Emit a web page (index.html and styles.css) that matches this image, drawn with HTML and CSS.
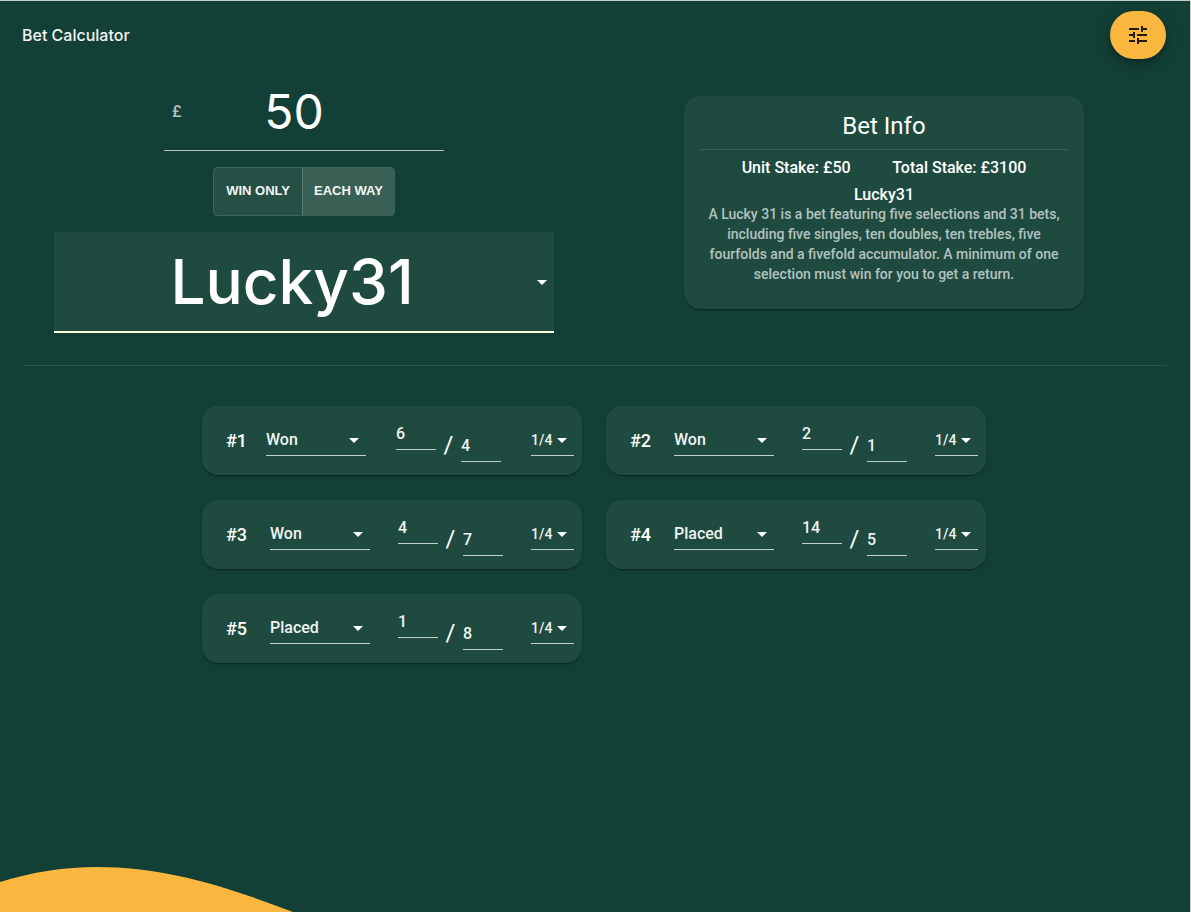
FILE: index.html
```html
<!DOCTYPE html>
<html lang="en">
<head>
<meta charset="utf-8">
<meta name="viewport" content="width=device-width, initial-scale=1">
<title>Bet Calculator</title>
<link rel="stylesheet" href="styles.css">
</head>
<body>
<svg class="wave" viewBox="0 0 300 45" aria-hidden="true"><path d="M0 15C32 5 65 0 97 0C165 0 225 19 293 45H0Z"/></svg>
<div class="page">
  <header class="header">
    <h1 class="brand">Bet Calculator</h1>
    <button class="fab" type="button" aria-label="Settings">
      <svg class="fab-icon" viewBox="0 0 24 24" aria-hidden="true"><path d="M3 17v2h6v-2H3zM3 5v2h10V5H3zm10 16v-2h8v-2h-8v-2h-2v6h2zM7 9v2H3v2h4v2h2V9H7zm14 4v-2H11v2h10zm-6-4h2V7h4V5h-4V3h-2v6z"/></svg>
    </button>
  </header>
  <main>
    <section class="setup">
      <div class="controls">
        <label class="stake"><span class="currency">£</span><input class="stake-input" type="text" inputmode="decimal" value="50" aria-label="Stake"></label>
        <div class="toggle" role="group" aria-label="Bet mode">
          <button class="toggle-button" type="button" aria-pressed="false">WIN ONLY</button>
          <button class="toggle-button toggle-button-active" type="button" aria-pressed="true">EACH WAY</button>
        </div>
        <div class="picker picker-type">
          <select class="select" aria-label="Bet type"><option>Lucky31</option></select>
          <svg class="arrow" viewBox="0 0 24 24" aria-hidden="true"><path d="M7 10l5 5 5-5z"/></svg>
        </div>
      </div>
      <article class="info">
        <h2 class="info-title">Bet Info</h2>
        <div class="stats"><span>Unit Stake: £50</span><span>Total Stake: £3100</span></div>
        <h3 class="info-name">Lucky31</h3>
        <p class="info-text">A Lucky 31 is a bet featuring five selections and 31 bets, including five singles, ten doubles, ten trebles, five fourfolds and a fivefold accumulator. A minimum of one selection must win for you to get a return.</p>
      </article>
    </section>
    <section class="legs" aria-label="Selections">
      <div class="leg">
        <span class="leg-name leg-name-narrow">#1</span>
        <div class="picker picker-result"><select class="select" aria-label="Result 1"><option>Won</option><option>Placed</option></select><svg class="arrow" viewBox="0 0 24 24" aria-hidden="true"><path d="M7 10l5 5 5-5z"/></svg></div>
        <div class="odds"><input class="odd" type="text" value="6" aria-label="Numerator 1"><span class="slash">/</span><input class="odd odd-low" type="text" value="4" aria-label="Denominator 1"></div>
        <div class="picker picker-place"><select class="select" aria-label="Place terms 1"><option>1/4</option></select><svg class="arrow" viewBox="0 0 24 24" aria-hidden="true"><path d="M7 10l5 5 5-5z"/></svg></div>
      </div>
      <div class="leg">
        <span class="leg-name">#2</span>
        <div class="picker picker-result"><select class="select" aria-label="Result 2"><option>Won</option><option>Placed</option></select><svg class="arrow" viewBox="0 0 24 24" aria-hidden="true"><path d="M7 10l5 5 5-5z"/></svg></div>
        <div class="odds"><input class="odd" type="text" value="2" aria-label="Numerator 2"><span class="slash">/</span><input class="odd odd-low" type="text" value="1" aria-label="Denominator 2"></div>
        <div class="picker picker-place"><select class="select" aria-label="Place terms 2"><option>1/4</option></select><svg class="arrow" viewBox="0 0 24 24" aria-hidden="true"><path d="M7 10l5 5 5-5z"/></svg></div>
      </div>
      <div class="leg">
        <span class="leg-name">#3</span>
        <div class="picker picker-result"><select class="select" aria-label="Result 3"><option>Won</option><option>Placed</option></select><svg class="arrow" viewBox="0 0 24 24" aria-hidden="true"><path d="M7 10l5 5 5-5z"/></svg></div>
        <div class="odds"><input class="odd" type="text" value="4" aria-label="Numerator 3"><span class="slash">/</span><input class="odd odd-low" type="text" value="7" aria-label="Denominator 3"></div>
        <div class="picker picker-place"><select class="select" aria-label="Place terms 3"><option>1/4</option></select><svg class="arrow" viewBox="0 0 24 24" aria-hidden="true"><path d="M7 10l5 5 5-5z"/></svg></div>
      </div>
      <div class="leg">
        <span class="leg-name">#4</span>
        <div class="picker picker-result"><select class="select" aria-label="Result 4"><option>Won</option><option selected>Placed</option></select><svg class="arrow" viewBox="0 0 24 24" aria-hidden="true"><path d="M7 10l5 5 5-5z"/></svg></div>
        <div class="odds"><input class="odd" type="text" value="14" aria-label="Numerator 4"><span class="slash">/</span><input class="odd odd-low" type="text" value="5" aria-label="Denominator 4"></div>
        <div class="picker picker-place"><select class="select" aria-label="Place terms 4"><option>1/4</option></select><svg class="arrow" viewBox="0 0 24 24" aria-hidden="true"><path d="M7 10l5 5 5-5z"/></svg></div>
      </div>
      <div class="leg">
        <span class="leg-name">#5</span>
        <div class="picker picker-result"><select class="select" aria-label="Result 5"><option>Won</option><option selected>Placed</option></select><svg class="arrow" viewBox="0 0 24 24" aria-hidden="true"><path d="M7 10l5 5 5-5z"/></svg></div>
        <div class="odds"><input class="odd" type="text" value="1" aria-label="Numerator 5"><span class="slash">/</span><input class="odd odd-low" type="text" value="8" aria-label="Denominator 5"></div>
        <div class="picker picker-place"><select class="select" aria-label="Place terms 5"><option>1/4</option></select><svg class="arrow" viewBox="0 0 24 24" aria-hidden="true"><path d="M7 10l5 5 5-5z"/></svg></div>
      </div>
    </section>
  </main>
</div>
</body>
</html>
```

FILE: styles.css
```css
* { box-sizing: border-box; }

body {
  position: relative;
  min-height: 100vh;
  margin: 0;
  border-top: 1px solid #c4cfcc;
  border-right: 1px solid #c4cfcc;
  background: #134036;
  color: #fff;
  font-family: Roboto, "Liberation Sans", sans-serif;
  font-size: 16px;
  font-weight: 500;
}

h1, h2, h3, p { margin: 0; font: inherit; }
button, input, select { margin: 0; font: inherit; color: inherit; }

.page { position: relative; padding: 10px 24px 24px 22px; }

.wave {
  position: absolute;
  left: 0;
  bottom: 0;
  width: 300px;
  height: 45px;
  fill: #fab740;
}

.header { display: flex; align-items: center; justify-content: space-between; }
.brand { color: #f0f3f2; font-family: Inter, sans-serif; font-size: 16px; }

.fab {
  display: flex;
  align-items: center;
  justify-content: center;
  width: 56px;
  height: 48px;
  padding: 0;
  border: 0;
  border-radius: 24px;
  background: #fab740;
  color: #1f1a10;
  box-shadow: 0 3px 5px -1px rgba(0, 0, 0, .2), 0 6px 10px rgba(0, 0, 0, .14), 0 1px 18px rgba(0, 0, 0, .12);
}
.fab-icon { width: 24px; height: 24px; fill: currentColor; }

.setup {
  display: grid;
  grid-template-columns: 1fr 1fr;
  gap: 16px;
  align-items: start;
  justify-items: center;
  padding: 16px 0 32px;
  border-bottom: 1px solid #2b5449;
}

.controls {
  display: flex;
  flex-direction: column;
  align-items: center;
  gap: 16px;
  width: 100%;
}

.stake {
  display: flex;
  align-items: center;
  width: 280px;
  height: 76px;
  padding: 0 8px 2px;
  border-bottom: 1px solid #b8c6c3;
}
.currency { width: 12px; color: #b4c2bf; }
.stake-input {
  flex: 1;
  min-width: 0;
  height: 64px;
  padding: 0 32px 0 0;
  border: 0;
  background: none;
  font-family: Inter, sans-serif;
  font-size: 48px;
  font-weight: 400;
  text-align: center;
}

.toggle {
  display: flex;
  border: 1px solid #426359;
  border-radius: 4px;
  background: #264f46;
  overflow: hidden;
}
.toggle-button {
  height: 47px;
  padding: 0 12px 2px;
  border: 0;
  background: none;
  color: #f3f6f5;
  font-family: "Liberation Sans", sans-serif;
  font-size: 13px;
  font-weight: 700;
}
.toggle-button-active { padding: 0 11px 2px; border-left: 1px solid #5d7c74; background: #3a6056; }

.picker {
  display: grid;
  align-items: center;
  border-bottom: 1px solid #c0cdca;
}
.picker > * { grid-area: 1 / 1; }
.select {
  width: 100%;
  height: 31px;
  padding: 0 24px 0 0;
  border: 0;
  border-radius: 0;
  background: none;
  appearance: none;
  color: #f0f3f2;
}
.select option { color: #134036; }
.arrow {
  justify-self: end;
  width: 24px;
  height: 24px;
  fill: #fff;
  pointer-events: none;
}

.picker-type {
  width: 100%;
  max-width: 500px;
  border-bottom: 2px solid #fdfbdc;
  background: #1e4a40;
}
.picker-type .select {
  height: 99px;
  color: #fff;
  font-family: Inter, sans-serif;
  font-size: 62px;
  font-weight: 500;
  text-align: center;
  text-align-last: center;
}
.picker-result { width: 100px; }
.picker-place { width: 43px; }
.picker-place .select { padding-right: 16px; font-size: 14px; }

.info,
.leg {
  border-radius: 16px;
  background: #1e4a40;
  box-shadow: 0 2px 1px -1px rgba(0, 0, 0, .2), 0 1px 1px rgba(0, 0, 0, .14), 0 1px 3px rgba(0, 0, 0, .12);
}

.info {
  width: 100%;
  max-width: 400px;
  margin-top: 21px;
  padding: 16px 16px 25px;
  text-align: center;
}
.info-title {
  padding-bottom: 9px;
  border-bottom: 1px solid #375e55;
  font-size: 24px;
  font-weight: 400;
  line-height: 28px;
}
.stats {
  display: flex;
  justify-content: space-evenly;
  padding: 6px 0;
  line-height: 24px;
}
.info-name { line-height: 18px; }
.info-text { color: #b4c2bf; font-size: 14px; line-height: 20px; }

.legs {
  display: grid;
  grid-template-columns: repeat(auto-fit, 380px);
  justify-content: center;
  gap: 25px 24px;
  max-width: 1144px;
  margin: 0 auto;
  padding: 40px 150px 0;
}
.leg {
  display: flex;
  align-items: center;
  justify-content: space-between;
  min-height: 69px;
  padding: 0 8px 1px 24px;
}
.leg-name { width: 24px; margin-right: -8px; font-size: 18px; }
.leg-name-narrow { width: 18px; }

.odds { display: flex; align-items: flex-start; height: 44px; }
.odd {
  width: 40px;
  height: 32px;
  padding: 0;
  border: 0;
  border-bottom: 1px solid #c0cdca;
  border-radius: 0;
  background: none;
  color: #f0f3f2;
}
.odd-low, .slash { align-self: flex-end; }
.slash {
  width: 25px;
  font-size: 24px;
  font-weight: 400;
  line-height: 34px;
  text-align: center;
}
```
